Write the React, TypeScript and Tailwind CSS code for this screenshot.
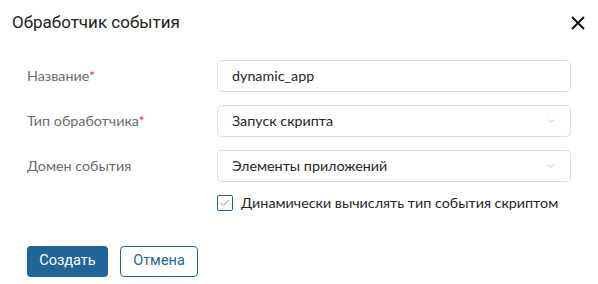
import { ChevronDown, Check } from 'lucide-react';

function Label({ text, required }: { text: string; required?: boolean }) {
  return (
    <div className="w-[190px] text-[14.3px] text-[#6b6b6b]">
      {text}
      {required && <span className="text-[#e0302f]">*</span>}
    </div>
  );
}

function Select({ value }: { value: string }) {
  return (
    <div className="flex h-[32px] flex-1 items-center justify-between rounded-[5px] border border-[#dcdcdc] bg-white pl-[14px] pr-[14px] text-[14.3px] text-[#262626]">
      <span>{value}</span>
      <ChevronDown className="h-[10px] w-[10px] text-[#9a9a9a]" strokeWidth={1.5} />
    </div>
  );
}

export default function App() {
  return (
    <div className="h-[284px] w-[598px] overflow-hidden bg-white font-['Lato',sans-serif]">
      <div className="flex items-center justify-between pl-[12px] pr-[12px] pt-[10px]">
        <h2 className="font-['Roboto',sans-serif] text-[17px] text-[#222]">Обработчик события</h2>
        <svg width="16" height="16" viewBox="0 0 16 16">
          <path d="M2 2L14 14M14 2L2 14" stroke="#111" strokeWidth="2" />
        </svg>
      </div>

      <div className="mt-[24px] flex flex-col gap-[13px] pl-[27px] pr-[27px]">
        <div className="flex items-center">
          <Label text="Название" required />
          <div className="flex h-[32px] flex-1 items-center rounded-[5px] border border-[#dcdcdc] bg-white pl-[14px] text-[14.3px] text-[#262626]">
            dynamic_app
          </div>
        </div>
        <div className="flex items-center">
          <Label text="Тип обработчика" required />
          <Select value="Запуск скрипта" />
        </div>
        <div className="flex items-center">
          <Label text="Домен события" />
          <Select value="Элементы приложений" />
        </div>
        <div className="flex h-[16px] items-center pl-[190px]">
          <div className="flex h-[16px] w-[16px] shrink-0 items-center justify-center rounded-[2px] border border-[#1f6597]">
            <Check className="h-[12px] w-[12px] text-[#4a84b8]" strokeWidth={1.5} />
          </div>
          <span className="ml-[8px] whitespace-nowrap text-[14.3px] text-[#262626]">Динамически вычислять тип события скриптом</span>
        </div>
      </div>

      <div className="mt-[35px] flex gap-[12px] pl-[27px] font-['Roboto',sans-serif]">
        <button className="h-[31px] w-[81px] rounded-[4px] bg-[#1f6597] text-[14.5px] text-white">Создать</button>
        <button className="h-[31px] w-[78px] rounded-[4px] border border-[#1f6597] bg-white text-[14.5px] text-[#1f6597]">
          Отмена
        </button>
      </div>
    </div>
  );
}
